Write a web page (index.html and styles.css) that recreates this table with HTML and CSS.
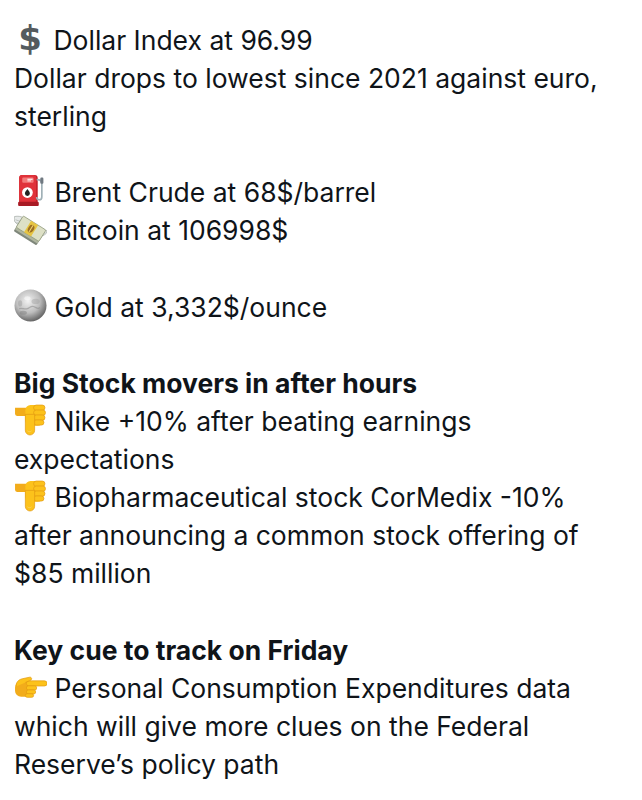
FILE: index.html
```html
<!DOCTYPE html>
<html lang="en">
<head>
<meta charset="utf-8">
<title>Market update</title>
<link rel="stylesheet" href="styles.css">
</head>
<body>
<article class="post">
  <p class="block">
    <span class="line"><span class="emo emo-dollar">$</span> Dollar Index at 96.99</span>
    <span class="line">Dollar drops to lowest since 2021 against euro, sterling</span>
  </p>

  <p class="block">
    <span class="line"><svg class="emo" viewBox="0 0 32 32" aria-hidden="true">
      <rect x="5" y="1" width="18" height="30" rx="3" fill="#c21f29"/>
      <rect x="5" y="1" width="16.5" height="27" rx="3" fill="#e0323a"/>
      <rect x="8" y="3.5" width="11" height="5" rx="1" fill="#f37b7b"/>
      <rect x="13" y="4.6" width="5" height="1" fill="#fff"/>
      <rect x="13" y="6.3" width="3.5" height="0.8" fill="#fff"/>
      <circle cx="13" cy="18" r="5.2" fill="#fff"/>
      <path d="M13 14.6c1.6 2 2.4 3.2 2.4 4.3a2.4 2.4 0 0 1-4.8 0c0-1.1.8-2.3 2.4-4.3z" fill="#222"/>
      <rect x="4" y="27" width="20" height="4" rx="1" fill="#a81a24"/>
      <path d="M22 5.5c3 0 5 1.2 5 3.5v13c0 2-1 3-2.5 3s-2.5-1-2.5-2.6" fill="none" stroke="#9fb0b6" stroke-width="1.6"/>
      <rect x="25.5" y="3.5" width="3" height="6" rx="1" fill="#6f7880"/>
    </svg> Brent Crude at 68$/barrel</span>
    <span class="line"><svg class="emo" viewBox="0 0 32 32" aria-hidden="true">
      <path d="M0.3 4.5c4.5-1.2 10 .5 13 3.8l1 6c-5.5 0-11-1.6-13.3-4.6C.3 8.5 0 6.5.3 4.5z" fill="#e6e9e8" stroke="#a4aba6" stroke-width=".7"/>
      <path d="M1.5 7.5c3.2 1.4 7 2.2 11.5 2.4M2.3 10.3c2.8 1.1 6.2 1.8 10.2 2" fill="none" stroke="#a4aba6" stroke-width=".6"/>
      <path d="M31.8 18c-4-1.8-8.8-2-12.3-.5l-.6 6.2c5.4.7 10.3-.6 12.4-3 .6-.8.7-1.8.5-2.7z" fill="#e6e9e8" stroke="#a4aba6" stroke-width=".7"/>
      <path d="M30.6 20.2c-3.2 1-7 1.5-11 1.5M28.6 22.6c-2.6.7-5.5 1-8.8 1" fill="none" stroke="#a4aba6" stroke-width=".6"/>
      <g transform="rotate(32 16 17)">
        <rect x="3" y="14" width="26" height="13" rx="1.2" fill="#7f877b"/>
        <rect x="3" y="12" width="26" height="13" rx="1.2" fill="#afb59f"/>
        <rect x="3" y="9.5" width="26" height="13" rx="1.2" fill="#dde0c6" stroke="#8f987a" stroke-width=".7"/>
        <rect x="12" y="9.5" width="8" height="13" fill="#e6c443"/>
        <ellipse cx="16" cy="16" rx="2.8" ry="4" fill="#9c6f22"/>
        <rect x="15.5" y="12.2" width="1" height="7.6" fill="#f2d774"/>
      </g>
    </svg> Bitcoin at 106998$</span>
  </p>

  <p class="block">
    <span class="line"><svg class="emo" viewBox="0 0 32 32" aria-hidden="true">
      <defs>
        <radialGradient id="coin" cx="42%" cy="36%" r="68%">
          <stop offset="0" stop-color="#f2f2f2"/>
          <stop offset=".55" stop-color="#bdbdbd"/>
          <stop offset="1" stop-color="#5a5a5a"/>
        </radialGradient>
      </defs>
      <circle cx="16" cy="16" r="15.5" fill="url(#coin)"/>
      <path d="M5 19c3-1 5 1 8 0s3-3 6-2 4 3 6 1" fill="none" stroke="#8a8a8a" stroke-width="1.2" opacity=".55"/>
      <ellipse cx="21" cy="12" rx="4" ry="2.5" fill="#9a9a9a" opacity=".4"/>
      <ellipse cx="9" cy="23" rx="3.5" ry="2" fill="#7c7c7c" opacity=".45"/>
      <ellipse cx="6" cy="14" rx="2" ry="3" fill="#8a8a8a" opacity=".35"/>
      <ellipse cx="13" cy="9" rx="3" ry="2" fill="#fff" opacity=".5"/>
    </svg> Gold at 3,332$/ounce</span>
  </p>

  <p class="block">
    <strong class="line">Big Stock movers in after hours</strong>
    <span class="line"><svg class="emo" viewBox="0 0 32 32" aria-hidden="true">
      <path d="M1 4.5h14v8H3a2 2 0 0 1-2-2z" fill="#f2ac1b"/>
      <rect x="11" y="2" width="17" height="20" rx="5" fill="#fcc21b"/>
      <rect x="19" y="2" width="11" height="5.2" rx="2.6" fill="#fcc21b" stroke="#e39a12" stroke-width=".7"/>
      <rect x="19" y="6.8" width="11.5" height="5.2" rx="2.6" fill="#fcc21b" stroke="#e39a12" stroke-width=".7"/>
      <rect x="19" y="11.6" width="11" height="5.2" rx="2.6" fill="#fcc21b" stroke="#e39a12" stroke-width=".7"/>
      <rect x="19" y="16.4" width="10" height="5" rx="2.5" fill="#fcc21b" stroke="#e39a12" stroke-width=".7"/>
      <path d="M11 11h9v15.5a4.5 4.5 0 0 1-9 0z" fill="#fcc21b" stroke="#e39a12" stroke-width=".7"/>
      <path d="M13 27c1 1 3 1 4 0" fill="none" stroke="#f7d36a" stroke-width=".8"/>
    </svg> Nike +10% after beating earnings expectations</span>
    <span class="line"><svg class="emo" viewBox="0 0 32 32" aria-hidden="true">
      <path d="M1 4.5h14v8H3a2 2 0 0 1-2-2z" fill="#f2ac1b"/>
      <rect x="11" y="2" width="17" height="20" rx="5" fill="#fcc21b"/>
      <rect x="19" y="2" width="11" height="5.2" rx="2.6" fill="#fcc21b" stroke="#e39a12" stroke-width=".7"/>
      <rect x="19" y="6.8" width="11.5" height="5.2" rx="2.6" fill="#fcc21b" stroke="#e39a12" stroke-width=".7"/>
      <rect x="19" y="11.6" width="11" height="5.2" rx="2.6" fill="#fcc21b" stroke="#e39a12" stroke-width=".7"/>
      <rect x="19" y="16.4" width="10" height="5" rx="2.5" fill="#fcc21b" stroke="#e39a12" stroke-width=".7"/>
      <path d="M11 11h9v15.5a4.5 4.5 0 0 1-9 0z" fill="#fcc21b" stroke="#e39a12" stroke-width=".7"/>
      <path d="M13 27c1 1 3 1 4 0" fill="none" stroke="#f7d36a" stroke-width=".8"/>
    </svg> Biopharmaceutical stock CorMedix -10% after announcing a common stock offering of $85 million</span>
  </p>

  <p class="block">
    <strong class="line">Key cue to track on Friday</strong>
    <span class="line"><svg class="emo" viewBox="0 0 32 32" aria-hidden="true">
      <rect x="1" y="11" width="18" height="15" rx="6" fill="#f2ac1b"/>
      <rect x="12" y="10.5" width="20" height="5" rx="2.5" fill="#fcc21b" stroke="#e39a12" stroke-width=".7"/>
      <rect x="12" y="15.3" width="10" height="4.2" rx="2.1" fill="#fcc21b" stroke="#e39a12" stroke-width=".7"/>
      <rect x="12" y="19.3" width="9" height="4" rx="2" fill="#fcc21b" stroke="#e39a12" stroke-width=".7"/>
      <rect x="11" y="23" width="8" height="3.5" rx="1.75" fill="#fcc21b" stroke="#e39a12" stroke-width=".7"/>
      <path d="M2 16c0-4 2-6.5 6-7.5l7-1.5c2-.4 3 2 1 3l-5 2" fill="#fcc21b" stroke="#e39a12" stroke-width=".7"/>
    </svg> Personal Consumption Expenditures data which will give more clues on the Federal Reserve’s policy path</span>
  </p>
</article>
</body>
</html>
```
FILE: styles.css
```css
html, body {
  margin: 0;
  padding: 0;
  background: #ffffff;
}

.post {
  padding: 21px 20px 0 14px;
  font-family: "Inter", "Noto Sans", sans-serif;
  font-size: 26.5px;
  line-height: 38.1px;
  color: #0f1419;
}

.block {
  margin: 0 0 38.1px 0;
}

.line {
  display: block;
}

strong.line {
  font-weight: 700;
}

.emo {
  display: inline-block;
  width: 33px;
  height: 33px;
  vertical-align: -5px;
}

.emo-dollar {
  width: 32px;
  height: auto;
  vertical-align: baseline;
  text-align: center;
  font-family: "DejaVu Sans", sans-serif;
  font-weight: 700;
  font-size: 34px;
  line-height: 1;
  color: #555b5e;
}
```
